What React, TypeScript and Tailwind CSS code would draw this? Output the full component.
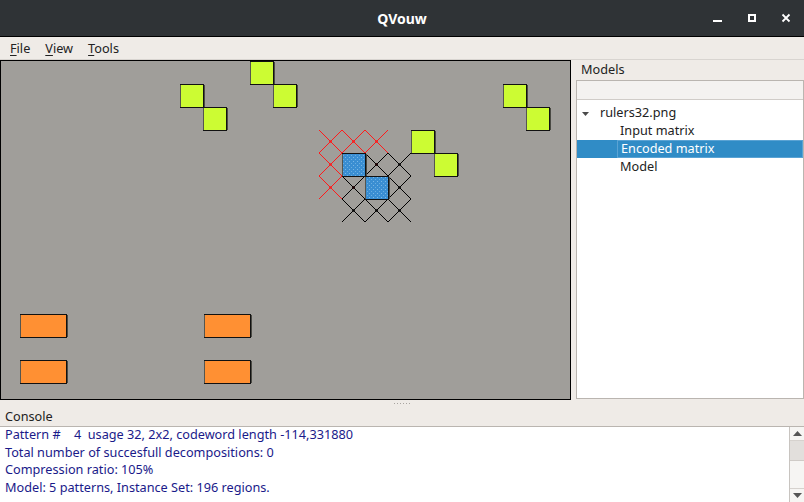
import React from "react";

// DATA
const CELL = 23;

const greens: [number, number][] = [
  [180, 84],
  [203, 107],
  [250, 61],
  [273, 84],
  [503, 84],
  [526, 107],
  [411, 130],
  [434, 153],
];

const blues: [number, number][] = [
  [342, 153],
  [365, 176],
];

const oranges: [number, number][] = [
  [20, 314],
  [20, 360],
  [204, 314],
  [204, 360],
];

const grid = (x0: number, y0: number) => {
  const cells: [number, number][] = [];
  for (let r = 0; r < 3; r++)
    for (let c = 0; c < 3; c++) cells.push([x0 + c * CELL, y0 + r * CELL]);
  return cells;
};

const consoleLines = [
  "Pattern #    4  usage 32, 2x2, codeword length -114,331880",
  "Total number of succesfull decompositions: 0",
  "Compression ratio: 105%",
  "Model: 5 patterns, Instance Set: 196 regions.",
];

// COMPONENTS
const Crosses: React.FC<{ x: number; y: number; color: string }> = ({
  x,
  y,
  color,
}) => (
  <g stroke={color} strokeWidth={1}>
    {grid(x, y).map(([cx, cy], i) => (
      <g key={i}>
        <line x1={cx} y1={cy} x2={cx + CELL} y2={cy + CELL} />
        <line x1={cx + CELL} y1={cy} x2={cx} y2={cy + CELL} />
        <circle
          cx={cx + CELL / 2}
          cy={cy + CELL / 2}
          r={1.3}
          fill={color}
          stroke="none"
        />
      </g>
    ))}
  </g>
);

const Block: React.FC<{
  x: number;
  y: number;
  w?: number;
  h?: number;
  fill: string;
}> = ({ x, y, w = CELL, h = CELL, fill }) => (
  <g>
    <rect x={x + 1} y={y + 1} width={w + 1} height={h - 1} fill="#4a4a44" />
    <rect
      x={x + 0.5}
      y={y + 0.5}
      width={w}
      height={h}
      fill={fill}
      stroke="#111"
      strokeWidth={1}
    />
    <line x1={x + 0.5} y1={y + 1} x2={x + 0.5} y2={y + h} stroke="#55554f" />
  </g>
);

const Canvas = () => (
  <div className="w-[571px] h-[340px] border border-black bg-[#a09e9a] overflow-hidden">
    <svg width={569} height={338} viewBox="1 61 569 338" className="block">
      <defs>
        <pattern id="dots" width="4" height="4" patternUnits="userSpaceOnUse">
          <rect width="4" height="4" fill="#3a8ed2" />
          <rect x="1" y="1" width="1" height="1" fill="#7bb8e6" />
          <rect x="3" y="3" width="1" height="1" fill="#6aaee0" />
        </pattern>
      </defs>
      <Crosses x={319} y={130} color="#ff1a1a" />
      <Crosses x={342} y={153} color="#000" />
      {greens.map(([x, y], i) => (
        <Block key={i} x={x} y={y} fill="#ccfc33" />
      ))}
      {blues.map(([x, y], i) => (
        <Block key={i} x={x} y={y} fill="url(#dots)" />
      ))}
      {oranges.map(([x, y], i) => (
        <Block key={i} x={x} y={y} w={46} fill="#ff9033" />
      ))}
    </svg>
  </div>
);

const TitleBar = () => (
  <div className="relative h-[37px] bg-[#2f3336] border-b border-black flex items-center justify-center">
    <span className="text-white font-bold text-[14px]">QVouw</span>
    <div className="absolute right-0 top-0 h-[36px] flex items-center">
      <svg width={100} height={36} viewBox="704 0 100 36">
        <rect x={713} y={20} width={9} height={2} fill="#fff" />
        <rect
          x={749}
          y={15}
          width={6}
          height={6}
          fill="none"
          stroke="#fff"
          strokeWidth={2}
        />
        <path
          d="M782.5 14.5 L789.5 21.5 M789.5 14.5 L782.5 21.5"
          stroke="#fff"
          strokeWidth={1.8}
        />
      </svg>
    </div>
  </div>
);

const MenuBar = () => (
  <div className="h-[23px] flex items-center gap-[15px] pl-[10px] pt-[2px] text-[12.7px] text-[#222] border-b border-[#d8d4d0]">
    <span>
      <span className="underline underline-offset-2">F</span>ile
    </span>
    <span>
      <span className="underline underline-offset-2">V</span>iew
    </span>
    <span>
      <span className="underline underline-offset-2">T</span>ools
    </span>
  </div>
);

const ModelsPanel = () => (
  <div className="flex-1 flex flex-col">
    <div className="h-[20px] pl-[5px] flex items-center text-[12.7px] text-[#222]">
      Models
    </div>
    <div className="h-[319px] bg-white border border-[#bab5b0] flex flex-col text-[12.7px] text-[#222]">
      <div className="h-[19px] bg-[#f4f2f0] border-b border-[#d0ccc8]" />
      <div className="pt-[4px]">
        <div className="h-[18px] flex items-center">
          <svg width={23} height={18} className="shrink-0">
            <path d="M5 8 L12 8 L8.5 12 Z" fill="#4a4a4a" />
          </svg>
          <span>rulers32.png</span>
        </div>
        <div className="h-[18px] flex items-center pl-[43px]">Input matrix</div>
        <div className="h-[18px] flex items-center bg-[#308cc6] text-white">
          <span className="ml-[40px] pl-[3px] h-full flex-1 flex items-center border border-[#5aa3d4]">
            Encoded matrix
          </span>
        </div>
        <div className="h-[18px] flex items-center pl-[43px]">Model</div>
      </div>
    </div>
  </div>
);

const ConsolePanel = () => (
  <div className="flex-1 flex flex-col">
    <div className="h-[20px] pl-[5px] pt-[2px] flex items-center text-[12.7px] text-[#222]">
      Console
    </div>
    <div className="flex-1 flex bg-white border-t border-[#bab5b0]">
      <div className="flex-1 pl-[5px] -mt-[1px] text-[12.7px] text-[#1a1a8a] whitespace-pre">
        {consoleLines.map((l, i) => (
          <div key={i} className="h-[17.6px] leading-[17.6px]">
            {l}
          </div>
        ))}
      </div>
      <div className="w-[15px] border-l border-[#c8c4c0] bg-[#f6f5f3] flex flex-col">
        <div className="h-[14px] flex items-center justify-center border-b border-[#d6d2ce]">
          <svg width={9} height={5}>
            <path d="M0 5 L4.5 0 L9 5 Z" fill="#555" />
          </svg>
        </div>
        <div className="h-[20px] bg-[#e2dfdc] border-b border-[#cfcbc7]" />
        <div className="flex-1" />
        <div className="h-[14px] flex items-center justify-center border-t border-[#d6d2ce]">
          <svg width={9} height={5}>
            <path d="M0 0 L9 0 L4.5 5 Z" fill="#555" />
          </svg>
        </div>
      </div>
    </div>
  </div>
);

export default function App() {
  return (
    <div
      className="w-[804px] h-[502px] flex flex-col bg-[#efebe7] overflow-hidden"
      style={{ fontFamily: '"Noto Sans", "Open Sans", sans-serif' }}
    >
      <TitleBar />
      <MenuBar />
      <div className="flex gap-[5px] h-[340px]">
        <Canvas />
        <ModelsPanel />
      </div>
      <div className="h-[6px] flex items-center justify-center gap-[2px]">
        {[0, 1, 2, 3, 4, 5].map((i) => (
          <div key={i} className="w-[1px] h-[1px] bg-[#a8a4a0]" />
        ))}
      </div>
      <ConsolePanel />
    </div>
  );
}
